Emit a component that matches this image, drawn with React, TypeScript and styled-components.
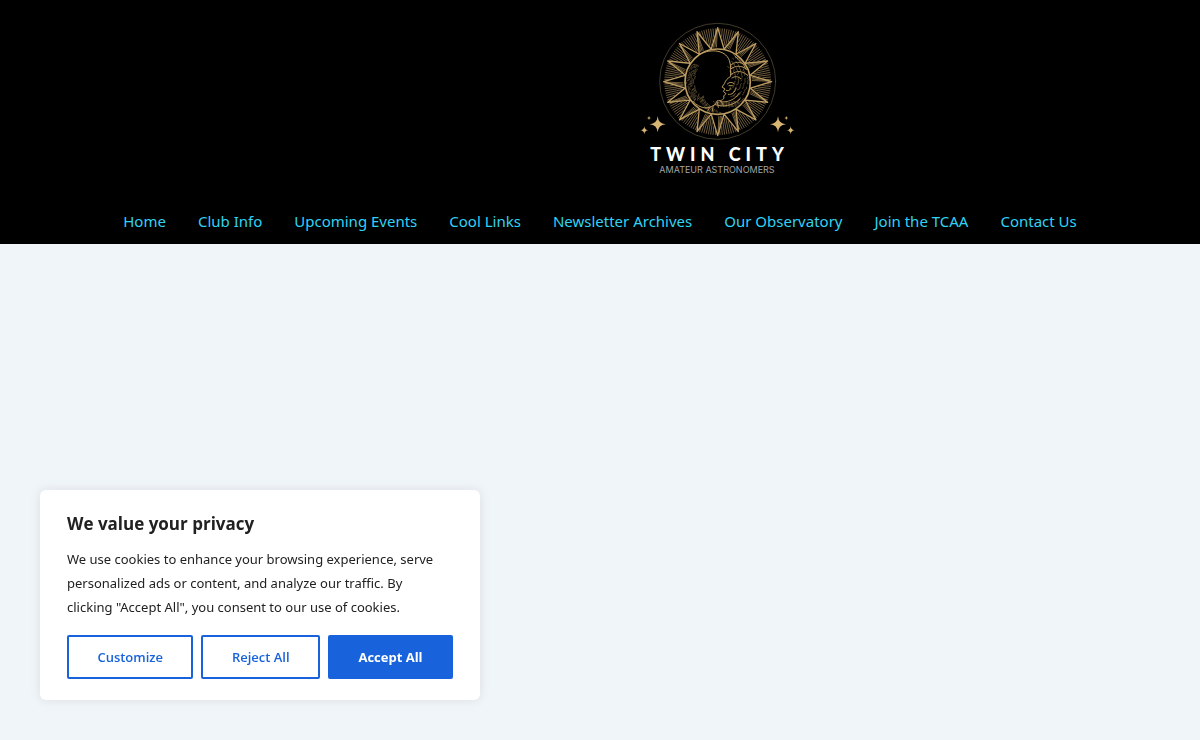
import React from "react";
import styled, { createGlobalStyle, css } from "styled-components";

const GlobalStyle = createGlobalStyle`
  *, *::before, *::after { box-sizing: border-box; }
  body {
    margin: 0;
    background: #f0f5fa;
    font-family: "Segoe UI", "Noto Sans", "Open Sans", sans-serif;
  }
`;

const Header = styled.header`
  background: #000;
  padding-top: 15px;
`;

const Branding = styled.div`
  display: flex;
  justify-content: center;
  padding-left: 234px;
`;

const LogoLink = styled.a`
  display: flex;
  flex-direction: column;
  align-items: center;
  text-decoration: none;
`;

const Emblem = styled.svg`
  display: block;
  width: 165px;
  height: 128px;
`;

const LogoName = styled.span`
  color: #fff;
  font: 900 18px/22px Lato, sans-serif;
  letter-spacing: 5px;
  padding-left: 5px;
`;

const LogoTagline = styled.span`
  color: #a5a5a5;
  font: 400 9px/10px Inter, sans-serif;
`;

const Nav = styled.nav`
  padding: 24px 20px 0;
`;

const NavList = styled.ul`
  display: flex;
  flex-wrap: wrap;
  justify-content: center;
  column-gap: 32px;
  margin: 0;
  padding: 0;
  list-style: none;
`;

const NavLink = styled.a`
  display: block;
  color: #2fd3f5;
  font-size: 15px;
  line-height: 45px;
  text-decoration: none;
  white-space: nowrap;
`;

const Consent = styled.section`
  position: fixed;
  left: 40px;
  bottom: 40px;
  width: 440px;
  max-width: calc(100% - 80px);
  padding: 22px 27px 21px;
  background: #fff;
  border-radius: 6px;
  box-shadow: 0 0 10px rgba(172, 171, 171, 0.3);
  color: #212121;
`;

const ConsentTitle = styled.h2`
  margin: 0 0 11px;
  font-family: "Segoe UI", "Open Sans", sans-serif;
  font-size: 17px;
  line-height: 24px;
  font-weight: 700;
`;

const ConsentText = styled.p`
  margin: 0 0 16px;
  padding-right: 8px;
  font-size: 13px;
  line-height: 24px;
`;

const Actions = styled.div`
  display: flex;
  gap: 8px;
`;

const Button = styled.button<{ $filled?: boolean }>`
  flex: 1 1 auto;
  height: 44px;
  padding: 0 20px;
  border: 2px solid #1863dc;
  border-radius: 2px;
  background: transparent;
  color: #1863dc;
  font-family: "Segoe UI", "Open Sans", sans-serif;
  font-size: 13px;
  font-weight: 600;
  white-space: nowrap;
  cursor: pointer;
  ${(p) =>
    p.$filled &&
    css`
      background: #1863dc;
      color: #fff;
      font-weight: 700;
    `}
`;

const CX = 248;
const CY = 200;
const point = (radius: number, degrees: number) => {
  const a = (degrees * Math.PI) / 180;
  return `${(CX + radius * Math.sin(a)).toFixed(1)} ${(CY - radius * Math.cos(a)).toFixed(1)}`;
};

const STEP = 22.5;
const rays = Array.from({ length: 16 }, (_, i) => i * STEP);

const burst = rays
  .flatMap((angle) =>
    [2.5, 5, 7.5, 10, 12.5, 15, 17.5, 20].map((d) => {
      const fromGap = Math.abs(d - 11.25);
      return `M${point(104 + fromGap * 5, angle + d)}L${point(159, angle + d)}`;
    })
  )
  .join("");

const shading = rays
  .flatMap((angle) =>
    [-7, -4.5, -2].map((d) => `M${point(104, angle + d)}L${point(154, angle + d / 5)}`)
  )
  .join("");

const outlines = rays
  .map((angle) => `M${point(100, angle - 11)}L${point(162, angle)}L${point(100, angle + 11)}`)
  .join("");

// Short engraved strokes scattered along the limb of the moon.
const engraving = Array.from({ length: 230 }, (_, i) => {
  const angle = 30 + ((i * 47.3) % 278);
  const spread = angle > 225 ? 24 : angle < 130 ? 48 : 34;
  const depth = 94 - ((i * 29) % spread);
  const lean = (i * 13) % 5;
  return `M${point(depth, angle)}L${point(depth - lean, angle + 3)}`;
}).join("");

const STARS = [
  { x: 68, y: 328, r: 24 },
  { x: 28, y: 346, r: 12 },
  { x: 42, y: 309, r: 6 },
  { x: 429, y: 328, r: 24 },
  { x: 467, y: 346, r: 12 },
  { x: 454, y: 309, r: 6 },
];

const starPath = (x: number, y: number, r: number) => {
  const k = r * 0.08;
  return `M${x} ${y - r}Q${x + k} ${y - k} ${x + r} ${y}Q${x + k} ${y + k} ${x} ${y + r}Q${x - k} ${y + k} ${x - r} ${y}Q${x - k} ${y - k} ${x} ${y - r}Z`;
};

function SunMoon() {
  return (
    <Emblem viewBox="0 0 495 384" aria-hidden="true" fill="none" stroke="#bd9d62" strokeLinecap="round" strokeLinejoin="round">
      <circle cx="248" cy="199" r="174" stroke="#62583f" strokeWidth="2" />
      <path d={burst} stroke="#a1875a" strokeWidth="2" />
      <path d={shading} stroke="#ab8e5a" strokeWidth="2" />
      <path d={outlines} strokeWidth="4" />
      <circle cx="248" cy="200" r="98" strokeWidth="5" />
      <path d={engraving} stroke="#7a6743" strokeWidth="2" />
      <path
        d="M190 121C218 101 270 101 283 136C290 153 285 174 287 184C278 190 271 196 269 205L261 216L270 222L265 229L273 236L266 243C270 253 259 258 247 257C244 271 228 277 211 279"
        strokeWidth="3"
      />
      <path
        d="M286 151C300 139 315 139 329 149M286 163C301 150 321 151 335 163M289 178C307 164 324 169 338 181M291 189C300 183 309 183 317 191M277 207C284 200 293 201 298 207M282 212L292 212M274 226C282 229 286 225 286 219M280 238C291 240 300 232 303 220M256 260C279 264 301 253 313 234M300 124C315 135 326 146 333 163M238 268C263 278 294 273 315 252M211 279C196 277 184 270 175 260M224 277L218 288M235 271L232 287M247 262L250 277M259 260L266 273"
        stroke="#b29259"
        strokeWidth="3"
      />
      {STARS.map((s) => (
        <path key={`${s.x}-${s.y}`} d={starPath(s.x, s.y, s.r)} fill="#d9b574" stroke="none" />
      ))}
    </Emblem>
  );
}

const LINKS = [
  "Home",
  "Club Info",
  "Upcoming Events",
  "Cool Links",
  "Newsletter Archives",
  "Our Observatory",
  "Join the TCAA",
  "Contact Us",
];

export default function App() {
  return (
    <>
      <GlobalStyle />
      <Header>
        <Branding>
          <LogoLink href="#home">
            <SunMoon />
            <LogoName>TWIN CITY</LogoName>
            <LogoTagline>AMATEUR ASTRONOMERS</LogoTagline>
          </LogoLink>
        </Branding>
        <Nav aria-label="Main">
          <NavList>
            {LINKS.map((label) => (
              <li key={label}>
                <NavLink href={`#${label.toLowerCase().replace(/ /g, "-")}`}>{label}</NavLink>
              </li>
            ))}
          </NavList>
        </Nav>
      </Header>
      <main />
      <Consent aria-labelledby="consent-title">
        <ConsentTitle id="consent-title">We value your privacy</ConsentTitle>
        <ConsentText>
          We use cookies to enhance your browsing experience, serve personalized ads or content, and
          analyze our traffic. By clicking "Accept All", you consent to our use of cookies.
        </ConsentText>
        <Actions>
          <Button type="button">Customize</Button>
          <Button type="button">Reject All</Button>
          <Button type="button" $filled>
            Accept All
          </Button>
        </Actions>
      </Consent>
    </>
  );
}
